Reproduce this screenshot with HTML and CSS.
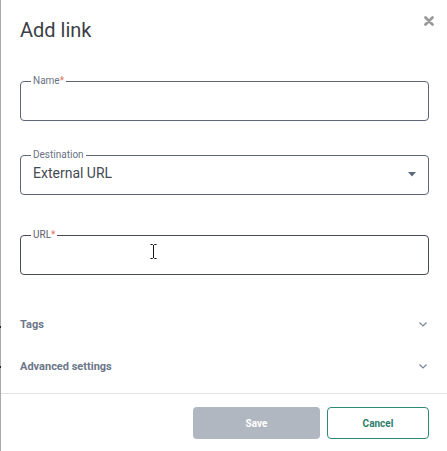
FILE: index.html
```html
<!DOCTYPE html>
<html>
<head>
<meta charset="utf-8">
<link rel="stylesheet" href="styles.css">
</head>
<body>
<div class="page">
  <div class="backdrop-edge">
    <span class="tick tick-1"></span>
    <span class="tick tick-2"></span>
  </div>
  <div class="modal">
    <div class="header">
      <h1 class="title">Add link</h1>
      <button class="close" aria-label="Close">
        <svg width="10" height="10" viewBox="0 0 10 10"><path d="M1.5 1.5 L8.5 8.5 M8.5 1.5 L1.5 8.5" stroke="#9a9a9a" stroke-width="2.8" stroke-linecap="round"/></svg>
      </button>
    </div>
    <div class="body">
      <fieldset class="field field-name">
        <legend class="legend">Name<span class="req">*</span></legend>
        <div class="value"></div>
      </fieldset>
      <fieldset class="field field-dest">
        <legend class="legend">Destination</legend>
        <div class="value select">
          <span>External URL</span>
          <svg class="caret" width="8" height="5" viewBox="0 0 8 5"><path d="M0 0 H8 L4 4.5 Z" fill="#5e6a7b"/></svg>
        </div>
      </fieldset>
      <fieldset class="field field-url">
        <legend class="legend">URL<span class="req">*</span></legend>
        <div class="value">
          <svg class="ibeam" width="7" height="15" viewBox="0 0 7 15"><path d="M0.5 0.5 H2.5 M4.5 0.5 H6.5 M3.5 1 V14 M0.5 14.5 H2.5 M4.5 14.5 H6.5 M2.5 0.5 L3.5 1.5 L4.5 0.5 M2.5 14.5 L3.5 13.5 L4.5 14.5" stroke="#111" stroke-width="1" fill="none"/></svg>
        </div>
      </fieldset>
      <div class="section">
        <span class="section-label">Tags</span>
        <svg class="chev" width="8" height="5" viewBox="0 0 8 5"><path d="M0.5 0.5 L4 4 L7.5 0.5" stroke="#7a879a" stroke-width="1.2" fill="none"/></svg>
      </div>
      <div class="section">
        <span class="section-label">Advanced settings</span>
        <svg class="chev" width="8" height="5" viewBox="0 0 8 5"><path d="M0.5 0.5 L4 4 L7.5 0.5" stroke="#7a879a" stroke-width="1.2" fill="none"/></svg>
      </div>
    </div>
    <div class="footer">
      <button class="btn btn-save">Save</button>
      <button class="btn btn-cancel">Cancel</button>
    </div>
  </div>
</div>
</body>
</html>
```

FILE: styles.css
```css
* { box-sizing: border-box; }
html, body { margin: 0; padding: 0; background: #ffffff; }
body { font-family: Roboto, "Liberation Sans", sans-serif; width: 447px; height: 451px; overflow: hidden; }

.page { display: flex; height: 451px; }

.backdrop-edge {
  position: relative;
  width: 1px;
  flex: 0 0 1px;
  background: #a8a8a8;
}
.tick { position: absolute; left: 0; width: 1px; height: 2px; background: #222; }
.tick-1 { top: 326px; }
.tick-2 { top: 366px; }

.modal {
  flex: 1;
  display: flex;
  flex-direction: column;
  background: #fff;
}

.header {
  display: flex;
  justify-content: space-between;
  align-items: flex-start;
  padding: 18px 13px 0 19px;
  height: 58px;
}
.title {
  margin: 0;
  font-size: 20px;
  font-weight: 400;
  color: #3b3f46;
  line-height: 24px;
}
.close {
  border: 0;
  background: none;
  padding: 0;
  margin-top: -2px;
  width: 10px;
  height: 10px;
  display: flex;
}

.body {
  padding: 0 18px 0 19px;
  flex: 1;
  display: flex;
  flex-direction: column;
}

.field {
  margin: 0;
  border: 1px solid #5c6675;
  border-radius: 4px;
  padding: 0 12px;
  height: 45px;
  min-width: 0;
}
.field-name { margin-top: 18px; }
.field-dest { margin-top: 29px; }
.field-url { margin-top: 35px; border-color: #474b52; }

.legend {
  font-size: 10px;
  color: #6a7383;
  padding: 0 2px;
  margin-left: -2px;
  line-height: 10px;
}
.field-url .legend { color: #5a5e66; }
.req { color: #e2725f; }

.value {
  height: 34px;
  margin-top: -4px;
  display: flex;
  align-items: center;
  font-size: 14px;
  color: #454a52;
  position: relative;
}
.select { justify-content: space-between; padding-right: 0; }
.caret { margin-right: 0; margin-top: 2px; }
.ibeam { position: absolute; left: 117px; top: 8px; }

.section {
  display: flex;
  justify-content: space-between;
  align-items: center;
  height: 42px;
  padding-right: 1px;
}
.section:first-of-type { margin-top: 28px; }
.section-label {
  font-size: 11px;
  font-weight: 700;
  color: #6b7689;
}
.chev { margin-right: 1px; }

.footer {
  border-top: 1px solid #e3e3e3;
  display: flex;
  justify-content: flex-end;
  gap: 7px;
  padding: 13px 18px 13px 0;
  height: 58px;
}
.btn {
  height: 32px;
  border-radius: 4px;
  font-family: Roboto, "Liberation Sans", sans-serif;
  font-size: 10px;
  font-weight: 700;
  cursor: pointer;
}
.btn-save {
  width: 127px;
  background: #b0b7c1;
  color: #ffffff;
  border: 0;
}
.btn-cancel {
  width: 102px;
  background: #fff;
  color: #2c7d6b;
  border: 1px solid #2e8a76;
}
```
